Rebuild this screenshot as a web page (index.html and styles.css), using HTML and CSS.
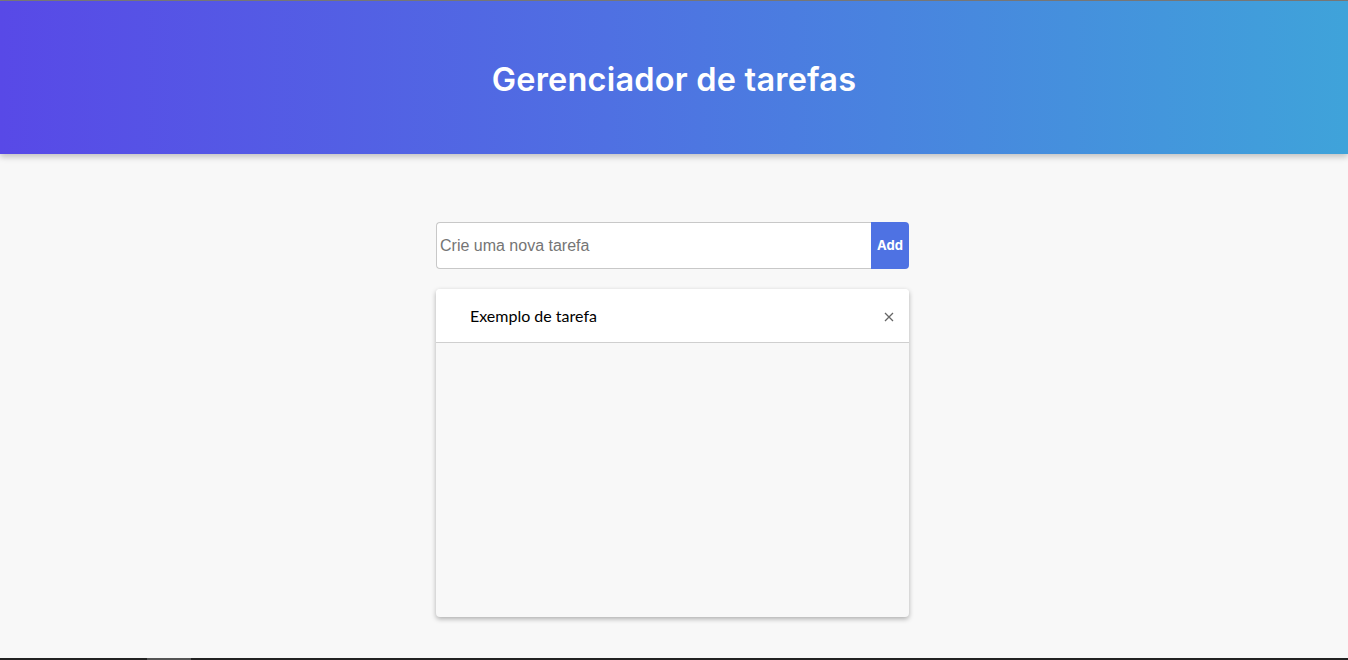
FILE: index.html
```html
<!DOCTYPE html>
<html lang="pt-BR">
<head>
<meta charset="utf-8">
<title>Gerenciador de tarefas</title>
<link rel="stylesheet" href="styles.css">
</head>
<body>
<div class="topline"></div>
<header class="header">
  <h1 class="title">Gerenciador de tarefas</h1>
</header>
<main class="main">
  <form class="form">
    <input class="input" type="text" placeholder="Crie uma nova tarefa">
    <button class="add" type="button">Add</button>
  </form>
  <section class="card">
    <div class="item">
      <span class="item-text">Exemplo de tarefa</span>
      <button class="remove" type="button" aria-label="Remover">
        <svg width="10" height="10" viewBox="0 0 10 10"><path d="M1 1L9 9M9 1L1 9" stroke="#666" stroke-width="1.3" fill="none"/></svg>
      </button>
    </div>
  </section>
</main>
<div class="bottombar"><span class="bottomtab"></span></div>
</body>
</html>
```

FILE: styles.css
```css
html, body {
  margin: 0;
  padding: 0;
  background: #f8f8f8;
  height: 660px;
  overflow: hidden;
}
body {
  display: flex;
  flex-direction: column;
  font-family: "Liberation Sans", Arial, sans-serif;
}
.topline {
  height: 1px;
  background: #7a7a7a;
}
.header {
  height: 153px;
  background: linear-gradient(90deg, #5849e7 0%, #4f70e2 45%, #3fa3da 100%);
  box-shadow: 0 3px 6px rgba(0,0,0,0.22);
  display: flex;
  align-items: center;
  justify-content: center;
  position: relative;
  z-index: 1;
}
.title {
  margin: 4px 0 0 0;
  color: #fff;
  font-family: Inter, "Noto Sans", sans-serif;
  font-weight: 600;
  font-size: 32.5px;
  letter-spacing: 0.2px;
}
.main {
  flex: 1;
  display: flex;
  flex-direction: column;
  align-items: center;
  padding-top: 68px;
  padding-right: 3px;
}
.form {
  display: flex;
  width: 473px;
  height: 47px;
  margin: 0;
}
.input {
  flex: 1;
  box-sizing: border-box;
  height: 47px;
  border: 1px solid #c8c8c8;
  border-right: none;
  border-radius: 4px 0 0 4px;
  padding: 0 0 0 3px;
  font-family: "Liberation Sans", Arial, sans-serif;
  font-size: 16px;
  background: #fff;
  outline: none;
}
.input::placeholder {
  color: #757575;
}
.add {
  width: 38px;
  height: 47px;
  border: none;
  border-radius: 0 4px 4px 0;
  background: #4e72e3;
  color: #fff;
  font-family: Inter, "Noto Sans", sans-serif;
  font-weight: 700;
  font-size: 13px;
  padding: 0 0 2px 0;
  cursor: pointer;
}
.card {
  margin-top: 20px;
  width: 473px;
  height: 328px;
  background: #f8f8f8;
  border-radius: 4px;
  box-shadow: 0 2px 5px rgba(0,0,0,0.3);
  overflow: hidden;
}
.item {
  height: 54px;
  box-sizing: border-box;
  background: #fff;
  border-bottom: 1px solid #cfcfcf;
  display: flex;
  align-items: center;
  padding: 0 14px 0 34px;
}
.item-text {
  flex: 1;
  font-family: Lato, sans-serif;
  font-weight: 400;
  font-size: 16px;
  color: #000;
  padding-bottom: 1px;
}
.remove {
  border: none;
  background: none;
  padding: 0;
  width: 12px;
  height: 12px;
  display: flex;
  align-items: center;
  justify-content: center;
  margin-top: 2px;
}
.bottombar {
  height: 2px;
  background: #222;
  position: relative;
}
.bottomtab {
  display: block;
  margin-left: 147px;
  width: 44px;
  height: 2px;
  background: #555;
}
```
